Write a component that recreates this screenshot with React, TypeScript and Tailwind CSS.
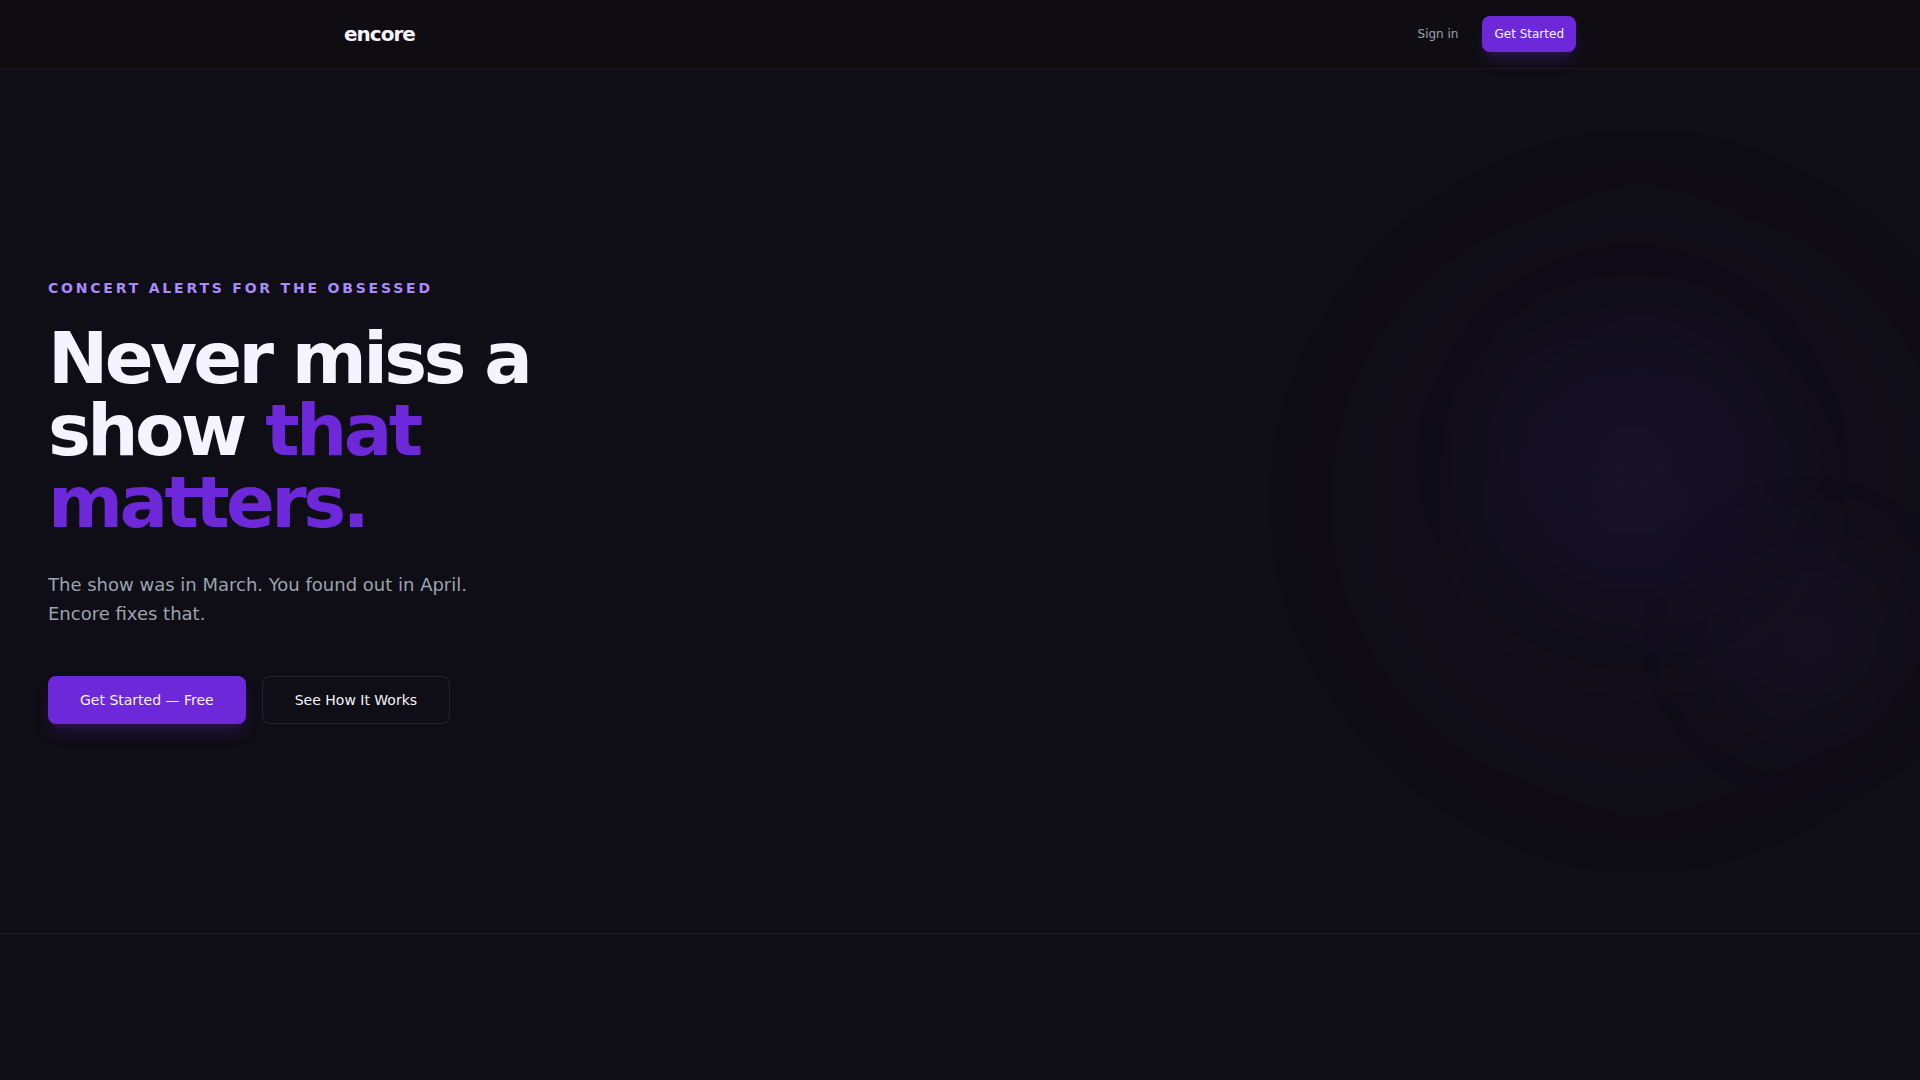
import React from 'react';

const Navbar: React.FC = () => {
  return (
    <nav className="sticky top-0 z-50 border-b border-white/5 bg-[#0f0d12]">
      <div className="max-w-7xl mx-auto px-6 h-17 flex items-center justify-between">
        <a href="#" className="text-xl font-bold tracking-tighter text-[#f5f3ff]">encore</a>
        <div className="flex items-center gap-6">
          <a href="#signin" className="text-xs text-[#9ca3af]">Sign in</a>
          <button className="h-9 px-3 rounded-lg bg-[#6d28d9] text-xs text-[#f5f3ff] shadow-lg shadow-[#6d28d9]/25">
            Get Started
          </button>
        </div>
      </div>
    </nav>
  );
};

const Hero: React.FC = () => {
  return (
    <section className="relative overflow-hidden min-h-[80vh] flex items-center px-12">
      {/* Ambient glow */}
      <div className="absolute inset-0 pointer-events-none">
        <div className="absolute top-1/2 -right-24 size-[750px] -translate-y-1/2 rounded-full bg-[radial-gradient(circle,#6d3be00d,transparent_70%)] blur-2xl" />
        <div className="absolute top-[45%] right-24 size-96 -translate-y-1/2 rounded-full bg-[radial-gradient(circle,#5b45e012,transparent_70%)] blur-2xl" />
        <div className="absolute top-[66%] -right-8 size-72 -translate-y-1/2 rounded-full bg-[radial-gradient(circle,#8b6cf60d,transparent_70%)] blur-2xl" />
      </div>
      <div className="relative max-w-lg">
        <p className="text-sm font-bold uppercase tracking-[0.2em] text-[#a78bfa] mb-6">
          Concert alerts for the obsessed
        </p>
        <h1 className="text-7xl leading-none font-bold tracking-tighter text-[#f5f3ff] mb-8">
          Never miss a show <span className="text-[#6d28d9]">that matters.</span>
        </h1>
        <p className="text-lg leading-[29px] text-[#9ca3af] mb-12 max-w-md">
          The show was in March. You found out in April. Encore fixes that.
        </p>
        <div className="flex gap-4">
          <button className="h-12 px-8 rounded-lg bg-[#6d28d9] text-sm text-[#f5f3ff] shadow-lg shadow-[#6d28d9]/25">
            Get Started — Free
          </button>
          <button className="h-12 px-8 rounded-lg border border-white/10 text-sm text-[#f5f3ff]">
            See How It Works
          </button>
        </div>
      </div>
    </section>
  );
};

export default function App() {
  return (
    <div className="min-h-screen bg-[#0f0d15] font-['DejaVu_Sans',sans-serif]">
      <Navbar />
      <Hero />
      <section className="border-t border-white/5" />
    </div>
  );
}
